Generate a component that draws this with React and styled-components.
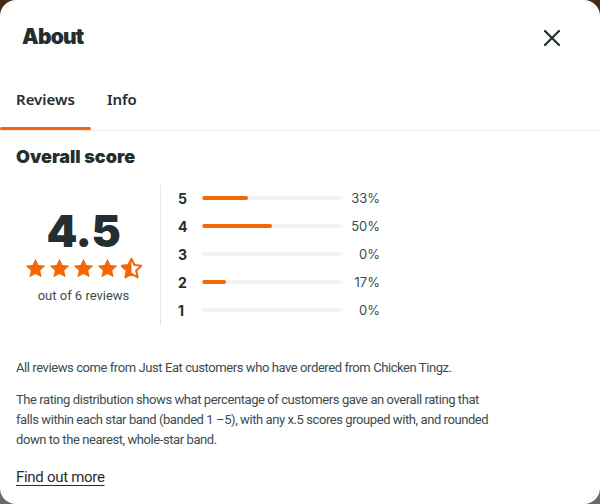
import React from "react";
import styled, { createGlobalStyle } from "styled-components";

const GlobalStyle = createGlobalStyle`
  html, body {
    margin: 0;
    padding: 0;
    height: 100%;
  }
  body {
    background: linear-gradient(180deg, #4a2a10 0%, #5a4a30 40%, #6a6a6a 100%);
    font-family: Roboto, "Noto Sans", sans-serif;
    color: #242e30;
  }
`;

const Modal = styled.div`
  width: 600px;
  height: 504px;
  background: #fff;
  border-radius: 16px;
  overflow: hidden;
  display: flex;
  flex-direction: column;
`;

const Header = styled.div`
  display: flex;
  align-items: center;
  justify-content: space-between;
  padding: 18px 24px 0 22px;
  height: 36px;
`;

const Title = styled.h1`
  margin: 0;
  font-family: Inter, "Noto Sans", sans-serif;
  font-weight: 900;
  font-size: 21px;
  letter-spacing: -0.8px;
  color: #242e30;
`;

const CloseButton = styled.button`
  border: none;
  background: none;
  padding: 0;
  width: 24px;
  height: 24px;
  display: flex;
  align-items: center;
  justify-content: center;
  margin-right: 12px;
  margin-top: 4px;
  cursor: pointer;
`;

const Tabs = styled.div`
  display: flex;
  margin-top: 30px;
  border-bottom: 1px solid #ececec;
`;

const Tab = styled.div`
  position: relative;
  padding: 0 16px;
  height: 46px;
  display: flex;
  align-items: flex-start;
  padding-top: 5px;
  box-sizing: border-box;
  font-family: "Noto Sans", sans-serif;
  font-size: 15px;
  font-weight: 600;
  color: #242e30;

  &::after {
    content: "";
    display: ${(p) => (p.active ? "block" : "none")};
    position: absolute;
    left: 0;
    right: 0;
    bottom: 0;
    height: 3px;
    border-radius: 2px;
    background: #f36805;
  }
`;

const Body = styled.div`
  padding: 15px 16px 0 16px;
`;

const SectionTitle = styled.h2`
  margin: 0;
  font-family: Inter, "Noto Sans", sans-serif;
  font-size: 18px;
  font-weight: 900;
  color: #242e30;
`;

const ScoreArea = styled.div`
  display: flex;
  align-items: flex-start;
  margin-top: 18px;
`;

const ScoreBox = styled.div`
  width: 145px;
  box-sizing: border-box;
  padding: 2px 9px 0 0;
  display: flex;
  flex-direction: column;
  align-items: center;
  justify-content: center;
  border-right: 1px solid #e6e6e6;
  height: 140px;
`;

const ScoreNumber = styled.div`
  font-family: Inter, "Noto Sans", sans-serif;
  font-weight: 900;
  font-size: 44px;
  line-height: 44px;
  letter-spacing: -0.3px;
  color: #242e30;
`;

const Stars = styled.div`
  display: flex;
  gap: 3px;
  margin-top: 5px;
`;

const ReviewCount = styled.div`
  margin-top: 9px;
  font-size: 13px;
  color: #3c4c4f;
`;

const Bars = styled.div`
  display: flex;
  flex-direction: column;
  padding-left: 17px;
  margin-top: -1px;
`;

const BarRow = styled.div`
  display: flex;
  align-items: center;
  height: 28px;
`;

const BarLabel = styled.div`
  width: 24px;
  font-family: Inter, "Noto Sans", sans-serif;
  font-size: 14px;
  font-weight: 700;
  color: #242e30;
`;

const Track = styled.div`
  width: 139px;
  height: 4px;
  border-radius: 2px;
  background: #f5f3f1;
  overflow: hidden;
`;

const Fill = styled.div`
  height: 100%;
  border-radius: 2px;
  background: #f36805;
`;

const Percent = styled.div`
  width: 39px;
  text-align: right;
  font-family: Inter, "Noto Sans", sans-serif;
  font-size: 13px;
  color: #3c4c4f;
`;

const Paragraph = styled.p`
  margin: 0 0 12px 0;
  font-size: 13px;
  line-height: 20px;
  letter-spacing: -0.42px;
  color: #3c4c4f;
`;

const Disclaimer = styled.div`
  margin-top: 33px;
  max-width: 480px;
`;

const Link = styled.a`
  display: inline-block;
  margin-top: 6px;
  font-size: 15px;
  letter-spacing: -0.3px;
  color: #242e30;
  text-decoration: underline;
  text-underline-offset: 3px;
`;

const STAR =
  "M12 0.8l3.4 7.2 7.9.9-5.9 5.4 1.6 7.8L12 18.2l-7 3.9 1.6-7.8L.7 8.9l7.9-.9z";

function Star({ half }) {
  return (
    <svg width="21" height="21" viewBox="0 0 24 24">
      {half ? (
        <>
          <path d={STAR} fill="none" stroke="#f36805" strokeWidth="2.4" strokeLinejoin="round" />
          <path d="M12 0.8V18.2l-7 3.9 1.6-7.8L.7 8.9l7.9-.9z" fill="#f36805" />
        </>
      ) : (
        <path d={STAR} fill="#f36805" />
      )}
    </svg>
  );
}

const ratings = [
  { stars: 5, pct: 33 },
  { stars: 4, pct: 50 },
  { stars: 3, pct: 0 },
  { stars: 2, pct: 17 },
  { stars: 1, pct: 0 },
];

export default function App() {
  return (
    <>
      <GlobalStyle />
      <Modal>
        <Header>
          <Title>About</Title>
          <CloseButton aria-label="Close">
            <svg width="20" height="20" viewBox="0 0 20 20">
              <path d="M3 3L17 17M17 3L3 17" stroke="#242e30" strokeWidth="2.2" strokeLinecap="round" />
            </svg>
          </CloseButton>
        </Header>
        <Tabs>
          <Tab active>Reviews</Tab>
          <Tab>Info</Tab>
        </Tabs>
        <Body>
          <SectionTitle>Overall score</SectionTitle>
          <ScoreArea>
            <ScoreBox>
              <ScoreNumber>4.5</ScoreNumber>
              <Stars>
                <Star />
                <Star />
                <Star />
                <Star />
                <Star half />
              </Stars>
              <ReviewCount>out of 6 reviews</ReviewCount>
            </ScoreBox>
            <Bars>
              {ratings.map((r) => (
                <BarRow key={r.stars}>
                  <BarLabel>{r.stars}</BarLabel>
                  <Track>
                    <Fill style={{ width: `${r.pct}%` }} />
                  </Track>
                  <Percent>{r.pct}%</Percent>
                </BarRow>
              ))}
            </Bars>
          </ScoreArea>
          <Disclaimer>
            <Paragraph>
              All reviews come from Just Eat customers who have ordered from Chicken Tingz.
            </Paragraph>
            <Paragraph>
              The rating distribution shows what percentage of customers gave an overall rating that
              falls within each star band (banded 1 –5), with any x.5 scores grouped with, and rounded
              down to the nearest, whole-star band.
            </Paragraph>
          </Disclaimer>
          <Link href="#">Find out more</Link>
        </Body>
      </Modal>
    </>
  );
}
